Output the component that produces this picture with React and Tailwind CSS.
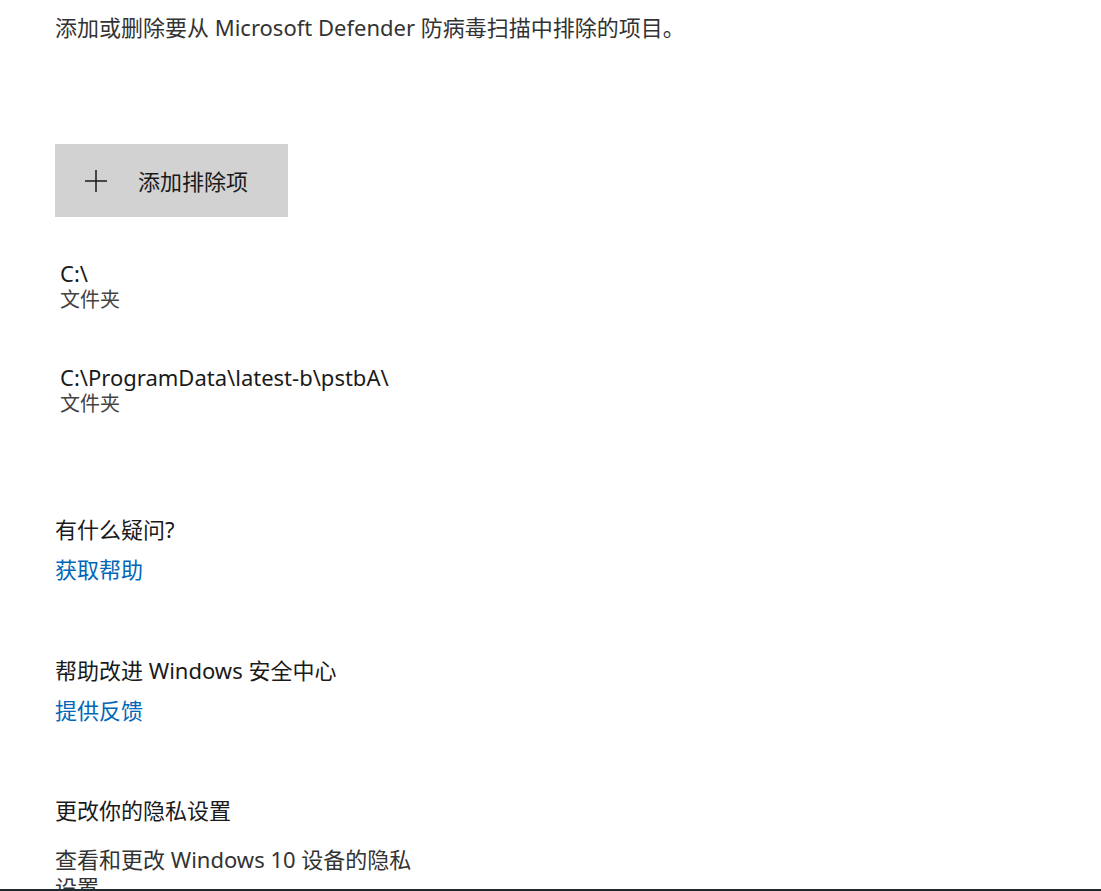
export default function App() {
  const font = { fontFamily: '"Noto Sans", "Noto Sans CJK SC", sans-serif' };
  return (
    <div className="relative h-[891px] overflow-hidden bg-white" style={font}>
      <div className="pl-[55px]">
        <p className="mt-[12px] text-[22px] leading-[30px] text-[#333333]">
          添加或删除要从 Microsoft Defender 防病毒扫描中排除的项目。
        </p>

        <button className="mt-[102px] flex h-[73px] w-[233px] items-center bg-[#d2d2d2] pl-[30px] text-left">
          <svg width="22" height="22" viewBox="0 0 22 22" className="shrink-0">
            <path d="M11 0V22M0 11H22" stroke="#1a1a1a" strokeWidth="1.5" />
          </svg>
          <span className="ml-[31px] text-[22px] leading-[30px] text-[#1a1a1a]">添加排除项</span>
        </button>

        <div className="pl-[5px]">
          <div className="mt-[42px]">
            <div className="text-[22px] leading-[28px] text-[#1a1a1a]">C:\</div>
            <div className="text-[20px] leading-[26px] text-[#444444]">文件夹</div>
          </div>
          <div className="mt-[50px]">
            <div className="text-[22px] leading-[28px] text-[#1a1a1a]">C:\ProgramData\latest-b\pstbA\</div>
            <div className="text-[20px] leading-[26px] text-[#444444]">文件夹</div>
          </div>
        </div>

        <div className="mt-[97px] text-[22px] leading-[30px] text-[#1a1a1a]">有什么疑问?</div>
        <div className="mt-[10px] text-[22px] leading-[30px] text-[#0067b8]">获取帮助</div>

        <div className="mt-[71px] text-[22px] leading-[30px] text-[#1a1a1a]">帮助改进 Windows 安全中心</div>
        <div className="mt-[10px] text-[22px] leading-[30px] text-[#0067b8]">提供反馈</div>

        <div className="mt-[70px] text-[22px] leading-[30px] text-[#1a1a1a]">更改你的隐私设置</div>
        <p className="mt-[20px] w-[370px] text-[22px] leading-[28px] text-[#333333]">
          查看和更改 Windows 10 设备的隐私设置
        </p>
      </div>
      <div className="absolute bottom-0 left-0 h-[2px] w-full bg-[#1f2a2e]" />
    </div>
  );
}
